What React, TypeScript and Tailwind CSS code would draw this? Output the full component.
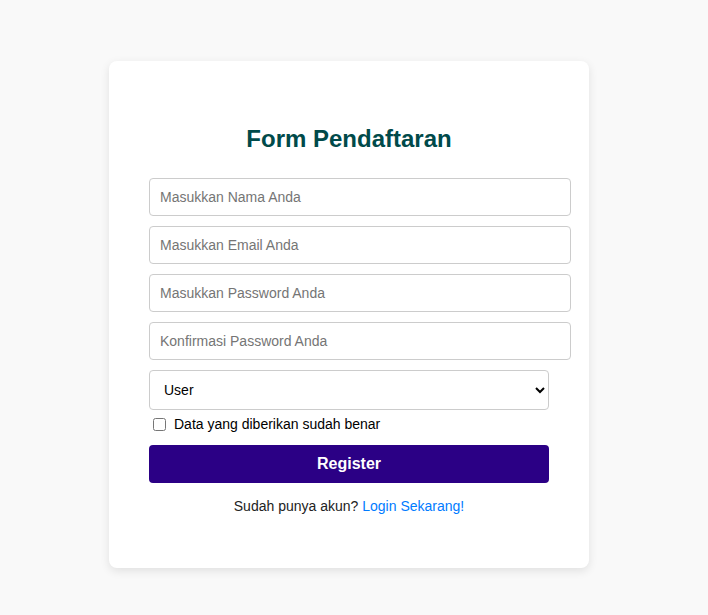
export default function App() {
  const inputCls =
    "block w-[422px] h-[38px] mt-[10px] first:mt-0 px-[10px] border border-[#cccccc] rounded-[4px] text-[14px] text-black placeholder:text-[#757575] bg-white outline-none";

  return (
    <div className="min-h-[615px] bg-[#f9f9f9] pt-[61px] font-['Liberation_Sans',Arial,sans-serif]">
      <div className="ml-[109px] w-[480px] bg-white rounded-[8px] shadow-[0_3px_10px_rgba(0,0,0,0.1)] px-10 pt-[64px] pb-[52px]">
        <h2 className="text-center text-[24px] leading-[28px] font-bold text-[#004a4a]">
          Form Pendaftaran
        </h2>

        <form className="mt-[25px]" onSubmit={(e) => e.preventDefault()}>
          <div>
            <input type="text" placeholder="Masukkan Nama Anda" className={inputCls} />
            <input type="email" placeholder="Masukkan Email Anda" className={inputCls} />
            <input type="password" placeholder="Masukkan Password Anda" className={inputCls} />
            <input type="password" placeholder="Konfirmasi Password Anda" className={inputCls} />
          </div>

          <select
            defaultValue="user"
            className="block w-[400px] h-[40px] mt-[10px] pl-[10px] pr-[6px] border border-[#cccccc] rounded-[4px] text-[14px] text-black bg-white"
          >
            <option value="user">User</option>
            <option value="admin">Admin</option>
          </select>

          <label className="flex items-center mt-[4px] h-[20px] text-[14px] text-black">
            <input type="checkbox" className="ml-[4px] mr-[8px] w-[13px] h-[13px]" />
            Data yang diberikan sudah benar
          </label>

          <button
            type="submit"
            className="block w-[400px] h-[38px] mt-[11px] rounded-[4px] bg-[#2b0085] text-white text-[16px] font-bold"
          >
            Register
          </button>
        </form>

        <p className="w-[400px] mt-[13px] leading-[20px] text-center text-[14px] text-[#222]">
          Sudah punya akun? <a href="#" className="text-[#007bff]">Login Sekarang!</a>
        </p>
      </div>
    </div>
  );
}
